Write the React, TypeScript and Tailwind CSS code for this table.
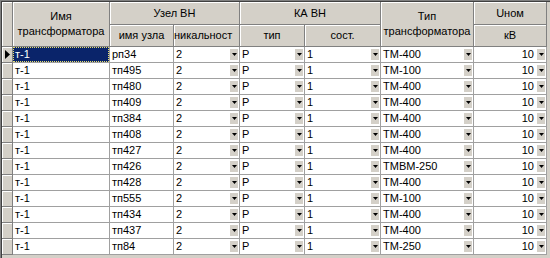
import React from "react";

// ── Data ───────────────────────────────────────────────────────────────────────
const rows: [string, string][] = [
  ["рп34", "ТМ-400"],
  ["тп495", "ТМ-100"],
  ["тп480", "ТМ-400"],
  ["тп409", "ТМ-400"],
  ["тп384", "ТМ-400"],
  ["тп408", "ТМ-400"],
  ["тп427", "ТМ-400"],
  ["тп426", "ТМВМ-250"],
  ["тп428", "ТМ-400"],
  ["тп555", "ТМ-100"],
  ["тп434", "ТМ-400"],
  ["тп437", "ТМ-400"],
  ["тп84", "ТМ-250"],
];

const head =
  "flex items-center justify-center text-center font-normal bg-[#d4d0c8] border-r border-b border-[#808080] shadow-[inset_1px_1px_0_#ffffff] leading-[15px] overflow-hidden whitespace-nowrap";
const line = "h-[16px] border-r border-b border-[#a0a0a0] flex items-center overflow-hidden whitespace-nowrap";
const cell = `${line} bg-white`;

// ── Combo arrow button ─────────────────────────────────────────────────────────
function DropBtn() {
  return (
    <span className="w-[8px] h-[11px] mr-[1px] bg-[#d4d0c8] flex items-center justify-center shrink-0">
      <svg width="5" height="3" viewBox="0 0 5 3">
        <polygon points="0,0 5,0 2.5,3" fill="#000" />
      </svg>
    </span>
  );
}

function ComboCell({ value, right }: { value: string; right?: boolean }) {
  return (
    <div className={cell}>
      <span className={`flex-1 px-[2px] ${right ? "text-right pr-[3px]" : ""}`}>{value}</span>
      <DropBtn />
    </div>
  );
}

export default function App() {
  return (
    <main
      className="w-[550px] h-[258px] bg-[#d4d0c8] overflow-hidden text-[11px] text-black"
      style={{ fontFamily: '"Liberation Sans", Arial, sans-serif' }}
    >
      <div className="h-full border-t border-l border-[#808080]">
        <div className="h-full border-t border-l border-[#404040]">
          <div className="grid grid-cols-[11px_97px_64px_66px_65px_76px_93px_73px] grid-rows-[23px_22px] auto-rows-[16px] w-max">
            {/* ── Header ── */}
            <div className={`${head} row-span-2`} />
            <div className={`${head} row-span-2 whitespace-normal`}>
              Имя
              <br />
              трансформатора
            </div>
            <div className={`${head} col-span-2`}>Узел ВН</div>
            <div className={`${head} col-span-2`}>КА ВН</div>
            <div className={`${head} row-span-2 whitespace-normal`}>
              Тип
              <br />
              трансформатора
            </div>
            <div className={head}>Uном</div>
            <div className={head}>имя узла</div>
            <div className={`${head} justify-start`}>никальност</div>
            <div className={head}>тип</div>
            <div className={head}>сост.</div>
            <div className={head}>кВ</div>

            {/* ── Rows ── */}
            {rows.map(([node, type], i) => (
              <React.Fragment key={node}>
                <div className="h-[16px] bg-[#d4d0c8] border-r border-b border-[#808080] shadow-[inset_1px_1px_0_#ffffff] flex items-center pl-[3px]">
                  {i === 0 && (
                    <svg width="5" height="9" viewBox="0 0 5 9">
                      <polygon points="0,0 5,4.5 0,9" fill="#000" />
                    </svg>
                  )}
                </div>
                {i === 0 ? (
                  <div className={`${line} bg-[#0a246a] text-white`}>
                    <span className="h-full w-full px-[1px] border border-dotted border-[#e8e070] flex items-center">
                      т-1
                    </span>
                  </div>
                ) : (
                  <div className={cell}>
                    <span className="px-[2px]">т-1</span>
                  </div>
                )}
                <div className={cell}>
                  <span className="px-[2px]">{node}</span>
                </div>
                <ComboCell value="2" />
                <ComboCell value="Р" />
                <ComboCell value="1" />
                <ComboCell value={type} />
                <ComboCell value="10" right />
              </React.Fragment>
            ))}
          </div>
        </div>
      </div>
    </main>
  );
}
